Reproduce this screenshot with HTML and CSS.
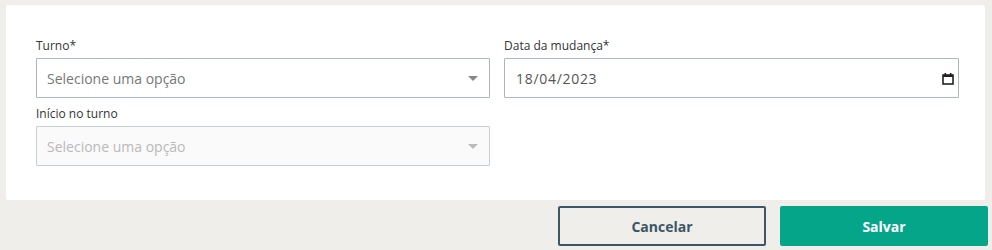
FILE: index.html
```html
<!DOCTYPE html>
<html lang="pt-BR">
<head>
    <meta charset="UTF-8">
    <title>Mudança de turno</title>
    <link rel="stylesheet" href="styles.css">
</head>
<body>
    <div class="page">
        <div class="card">
            <div class="form-grid">
                <div class="field">
                    <label class="field-label">Turno*</label>
                    <div class="select">
                        <span class="placeholder">Selecione uma opção</span>
                        <span class="caret"></span>
                    </div>
                </div>

                <div class="field">
                    <label class="field-label">Data da mudança*</label>
                    <div class="date-input">
                        <span class="date-value">18/04/2023</span>
                        <svg class="calendar" width="12" height="13" viewBox="0 0 12 13">
                            <rect x="1" y="3" width="10" height="9" fill="none" stroke="#222" stroke-width="1.6"/>
                            <rect x="1" y="3" width="10" height="2" fill="#222"/>
                            <rect x="2.5" y="1" width="1.6" height="2.5" fill="#222"/>
                            <rect x="7.9" y="1" width="1.6" height="2.5" fill="#222"/>
                        </svg>
                    </div>
                </div>

                <div class="field">
                    <label class="field-label">Início no turno</label>
                    <div class="select disabled">
                        <span class="placeholder">Selecione uma opção</span>
                        <span class="caret"></span>
                    </div>
                </div>
            </div>
        </div>

        <div class="actions">
            <button class="btn btn-outline">Cancelar</button>
            <button class="btn btn-primary">Salvar</button>
        </div>
    </div>
</body>
</html>
```

FILE: styles.css
```css
body {
    margin: 0;
    background: #efeeea;
    font-family: 'Open Sans', 'Noto Sans', sans-serif;
    color: #333;
}

.page {
    padding: 5px 4px 0 6px;
}

.card {
    width: 979px;
    box-sizing: border-box;
    background: #fff;
    border-radius: 2px;
    padding: 33px 26px 34px 30px;
}

.form-grid {
    display: grid;
    grid-template-columns: 454px 455px;
    column-gap: 14px;
    row-gap: 8px;
}

.field-label {
    display: block;
    font-size: 12px;
    line-height: 16px;
    color: #333;
    margin-bottom: 4px;
}

.select,
.date-input {
    height: 40px;
    box-sizing: border-box;
    border: 1px solid #a9b7c1;
    border-radius: 1px;
    background: #fff;
    display: flex;
    align-items: center;
    justify-content: space-between;
    padding: 0 10px 0 10px;
    font-size: 14px;
}

.date-input {
    padding: 0 4px 0 11px;
}

.placeholder {
    color: #777;
}

.date-value {
    color: #555;
    letter-spacing: 0.7px;
}

.caret {
    width: 0;
    height: 0;
    border-left: 5px solid transparent;
    border-right: 5px solid transparent;
    border-top: 5px solid #888;
    margin-right: 1px;
}

.select.disabled {
    background: #fafafa;
    border-color: #c6d0d4;
}

.select.disabled .placeholder {
    color: #b9b9b9;
}

.select.disabled .caret {
    border-top-color: #bbb;
}

.calendar {
    display: block;
}

.actions {
    display: flex;
    justify-content: flex-end;
    gap: 14px;
    margin-top: 6px;
}

.btn {
    width: 208px;
    height: 40px;
    box-sizing: border-box;
    border-radius: 2px;
    font-family: 'Open Sans', 'Noto Sans', sans-serif;
    font-size: 14px;
    font-weight: bold;
    cursor: pointer;
}

.btn-outline {
    background: transparent;
    border: 2px solid #3b5666;
    color: #3b5666;
}

.btn-primary {
    background: #05a58a;
    border: none;
    color: #fff;
}
```
